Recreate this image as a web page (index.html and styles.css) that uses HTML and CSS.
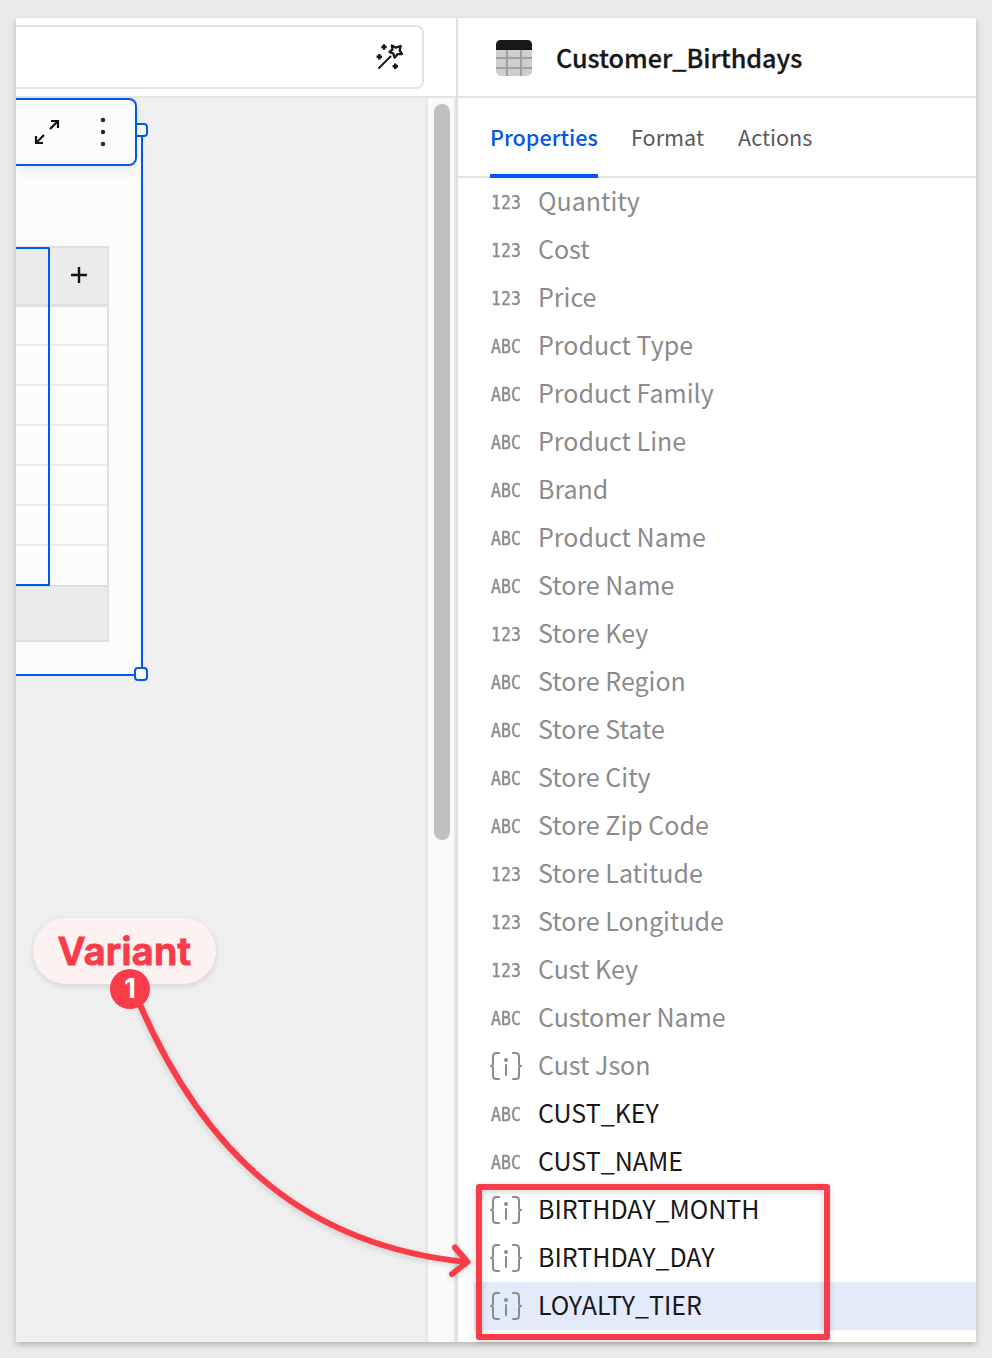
FILE: index.html
```html
<!DOCTYPE html>
<html lang="en">
<head>
<meta charset="utf-8">
<title>Customer_Birthdays</title>
<link rel="stylesheet" href="styles.css">
</head>
<body>
<svg class="defs" width="0" height="0">
  <symbol id="json" viewBox="0 0 32 28">
    <g fill="none" stroke="#8b8b8b" stroke-width="2" stroke-linecap="round" stroke-linejoin="round">
      <path d="M9 1H6.500Q3 1 3 4.500V11.500Q3 14 1 14Q3 14 3 16.500V23.500Q3 27 6.500 27H9M23 1H25.500Q29 1 29 4.500V11.500Q29 14 31 14Q29 14 29 16.500V23.500Q29 27 25.500 27H23M16 13V23"/>
    </g>
    <circle cx="16" cy="8" r="2" fill="#8b8b8b"/>
  </symbol>
</svg>
<main class="window">
  <section class="workspace">
    <div class="formula">
      <div class="formula-field">
        <svg class="wand" width="28" height="28" viewBox="0 0 28 28" fill="none" stroke="#181818" stroke-width="2">
          <path d="M3 26L14.500 14.500" stroke-linecap="round"/>
          <path d="M15.800 3.500L20 5.700L24.700 4L23.700 8.500L26 12L21.500 12.200L18.600 15.700L17.300 11.600L13.500 10L16.500 7.500Z" stroke-width="2.300" stroke-linejoin="round"/>
          <path d="M8 2.300V7.700M5.300 5H10.700M3.300 12V17.400M.6 14.700H6M19.300 21.600V27M16.600 24.300H22" stroke-width="2.500"/>
        </svg>
      </div>
    </div>
    <div class="stage">
      <div class="canvas">
        <div class="element">
          <div class="table">
            <div class="thead"><svg width="16" height="16" viewBox="0 0 16 16" stroke="#111" stroke-width="2.400"><path d="M8 0V16M0 8H16"/></svg></div>
            <div class="tr"></div><div class="tr"></div><div class="tr"></div><div class="tr"></div><div class="tr"></div><div class="tr"></div><div class="tr"></div>
            <div class="tfoot"></div>
            <div class="column-selection"></div>
          </div>
          <span class="handle handle-top"></span>
          <span class="handle handle-bottom"></span>
          <div class="toolbar">
            <svg width="26" height="26" viewBox="0 0 26 26" fill="none" stroke="#111" stroke-width="2.200"><path d="M16 10L24 2M17 2H24V9M10 16L2 24M2 17V24H9"/></svg>
            <svg class="more" width="6" height="30" viewBox="0 0 6 30" fill="#252525"><circle cx="3" cy="3" r="2.200"/><circle cx="3" cy="15" r="2.200"/><circle cx="3" cy="27" r="2.200"/></svg>
          </div>
        </div>
      </div>
      <div class="track"><div class="thumb"></div></div>
    </div>
  </section>
  <aside class="panel">
    <header class="title">
      <svg width="36" height="36" viewBox="0 0 36 36"><rect width="36" height="36" rx="5" fill="#cecece"/><path d="M0 10V5Q0 0 5 0H31Q36 0 36 5V10Z" fill="#181818"/><path d="M11 10V36M25 10V36M0 18H36M0 28H36" stroke="#a0a0a0" stroke-width="2"/></svg>
      <h1>Customer_Birthdays</h1>
    </header>
    <nav class="tabs"><a class="tab active">Properties</a><a class="tab format">Format</a><a class="tab">Actions</a></nav>
    <ul class="list">
      <li><span class="type">123</span><span class="name">Quantity</span></li>
      <li><span class="type">123</span><span class="name">Cost</span></li>
      <li><span class="type">123</span><span class="name">Price</span></li>
      <li><span class="type">ABC</span><span class="name">Product Type</span></li>
      <li><span class="type">ABC</span><span class="name">Product Family</span></li>
      <li><span class="type">ABC</span><span class="name">Product Line</span></li>
      <li><span class="type">ABC</span><span class="name">Brand</span></li>
      <li><span class="type">ABC</span><span class="name">Product Name</span></li>
      <li><span class="type">ABC</span><span class="name">Store Name</span></li>
      <li><span class="type">123</span><span class="name">Store Key</span></li>
      <li><span class="type">ABC</span><span class="name">Store Region</span></li>
      <li><span class="type">ABC</span><span class="name">Store State</span></li>
      <li><span class="type">ABC</span><span class="name">Store City</span></li>
      <li><span class="type">ABC</span><span class="name">Store Zip Code</span></li>
      <li><span class="type">123</span><span class="name">Store Latitude</span></li>
      <li><span class="type">123</span><span class="name">Store Longitude</span></li>
      <li><span class="type">123</span><span class="name">Cust Key</span></li>
      <li><span class="type">ABC</span><span class="name">Customer Name</span></li>
      <li><svg class="json"><use href="#json"/></svg><span class="name">Cust Json</span></li>
      <li class="on"><span class="type">ABC</span><span class="name">CUST_KEY</span></li>
      <li class="on"><span class="type">ABC</span><span class="name">CUST_NAME</span></li>
      <li class="on"><svg class="json"><use href="#json"/></svg><span class="name">BIRTHDAY_MONTH</span></li>
      <li class="on"><svg class="json"><use href="#json"/></svg><span class="name">BIRTHDAY_DAY</span></li>
      <li class="on selected"><svg class="json"><use href="#json"/></svg><span class="name">LOYALTY_TIER</span></li>
    </ul>
  </aside>
</main>
<div class="callout">Variant</div>
<div class="highlight"></div>
<svg class="arrow" width="992" height="1358" viewBox="0 0 992 1358" fill="none" stroke="#f83c49" stroke-width="6" stroke-linecap="round" stroke-linejoin="round">
  <path d="M138 1000C207 1162 312 1246 466 1262"/><path d="M455 1247.500L467.500 1262L452 1274"/>
</svg>
<div class="badge">1</div>
</body>
</html>
```
FILE: styles.css
```css
* { box-sizing: border-box; }
body {
  margin: 0;
  width: 992px;
  height: 1358px;
  padding: 18px 16px 16px;
  position: relative;
  overflow: hidden;
  background: #eaeaea;
  font-family: "Noto Sans CJK SC", "Open Sans", sans-serif;
}
.defs { position: absolute; }
.window {
  display: flex;
  width: 960px;
  height: 1324px;
  background: #fff;
  box-shadow: 0 3px 6px rgba(0, 0, 0, .22);
}
.workspace {
  width: 442px;
  display: flex;
  flex-direction: column;
  border-right: 2px solid #e1e1e1;
}
.formula {
  height: 80px;
  padding-top: 7px;
  border-bottom: 2px solid #e3e3e3;
}
.formula-field {
  width: 408px;
  height: 64px;
  border: 2px solid #e3e3e3;
  border-left: 0;
  border-radius: 0 8px 8px 0;
  display: flex;
  justify-content: flex-end;
  padding: 15px 18px 0 0;
}
.stage { flex: 1; display: flex; }
.canvas { width: 410px; background: #efefef; position: relative; }
.element {
  position: relative;
  width: 127px;
  height: 578px;
  background: linear-gradient(#efefef 32px, #fcfcfc 32px);
  border-bottom: 2px solid #0059eb;
}
.element::after {
  content: "";
  position: absolute;
  right: 0;
  top: 39px;
  bottom: 5px;
  width: 2px;
  background: #0059eb;
}
.table {
  position: absolute;
  top: 148px;
  left: 0;
  width: 93px;
  height: 396px;
  border: solid #dfdfdf;
  border-width: 2px 2px 2px 0;
}
.thead {
  height: 59px;
  background: #ebebeb;
  border-bottom: 3px solid #dfdfdf;
  display: flex;
  justify-content: flex-end;
  padding: 19px 20px 0 0;
}
.tr { height: 40px; border-bottom: 2px solid #ebebeb; }
.tr:nth-child(2) { height: 39px; }
.tr:nth-child(8) { height: 41px; border-bottom: 2px solid #dfdfdf; }
.tfoot { height: 53px; background: #ebebeb; }
.column-selection {
  position: absolute;
  left: 0;
  top: -1px;
  width: 34px;
  height: 339px;
  border: solid #0059eb;
  border-width: 2px 2px 2px 0;
  border-radius: 0 2px 0 0;
}
.handle {
  position: absolute;
  z-index: 1;
  right: -5px;
  width: 14px;
  height: 14px;
  background: #fff;
  border: 2px solid #0059eb;
  border-radius: 4px;
}
.handle-top { top: 25px; }
.handle-bottom { bottom: -7px; }
.toolbar {
  position: absolute;
  z-index: 2;
  left: 0;
  top: 0;
  width: 121px;
  height: 68px;
  background: #fcfcfc;
  border: 2px solid #0059eb;
  border-left: 0;
  border-radius: 0 8px 8px 0;
  box-shadow: 0 6px 12px rgba(0, 0, 0, .07);
  clip-path: inset(0 -20px -30px 0);
  display: flex;
  align-items: center;
  gap: 40px;
  padding-left: 18px;
}
.track {
  width: 30px;
  background: #fafafa;
  border: solid #e7e7e7;
  border-width: 0 2px;
  padding: 6px;
}
.thumb { width: 16px; height: 736px; background: #c1c1c1; border-radius: 8px; }
.panel { width: 518px; }
.title {
  height: 80px;
  border-bottom: 2px solid #e3e3e3;
  display: flex;
  align-items: center;
  gap: 24px;
  padding: 2px 0 0 38px;
}
.title h1 { margin: 0 0 2px; font-size: 25.150px; font-weight: 500; color: #181818; line-height: 36px; -webkit-text-stroke: .3px #181818; }
.tabs {
  height: 80px;
  border-bottom: 2px solid #e3e3e3;
  display: flex;
  gap: 33px;
  padding-left: 32px;
  font-size: 21.600px;
  color: #595959;
}
.tab { height: 80px; line-height: 77px; white-space: nowrap; }
.active { width: 108px; color: #0059eb; font-weight: 500; border-bottom: 4px solid #0059eb; }
.format { width: 74px; }
.list { margin: 0; padding: 0; list-style: none; }
.list li {
  display: flex;
  align-items: center;
  height: 48px;
  margin-left: 16px;
  padding-left: 16px;
  font-size: 25px;
  color: #8b8b8b;
  white-space: nowrap;
}
.name { margin-bottom: 4px; line-height: 36px; }
.list .on { color: #181818; }
.list .selected { background: #e3eafa; }
.type {
  width: 54.200px;
  margin-left: 1px;
  margin-right: -7.200px;
  font: 19px "DejaVu Sans Mono", monospace;
  color: #8b8b8b;
  -webkit-text-stroke: .4px #8b8b8b;
  transform: scaleX(.87);
  transform-origin: left;
}
.json { width: 32px; height: 28px; margin-right: 16px; flex: none; }
.callout {
  position: absolute;
  left: 33px;
  top: 918px;
  width: 183px;
  height: 66px;
  border-radius: 33px;
  background: #fef1f1;
  box-shadow: 0 2px 6px rgba(0, 0, 0, .12);
  text-align: center;
  font: 600 38px/67px Inter, sans-serif;
  letter-spacing: .3px;
  color: #f83c49;
  -webkit-text-stroke: 1.200px #f83c49;
}
.highlight {
  position: absolute;
  left: 476px;
  top: 1184px;
  width: 354px;
  height: 156px;
  border: 6px solid #f83c49;
  border-radius: 3px;
  filter: drop-shadow(0 2px 3px rgba(0, 0, 0, .18));
}
.arrow { position: absolute; left: 0; top: 0; filter: drop-shadow(0 2px 3px rgba(0, 0, 0, .15)); }
.badge {
  position: absolute;
  left: 110px;
  top: 969px;
  width: 40px;
  height: 40px;
  border-radius: 50%;
  background: #f83c49;
  color: #fff;
  font: 700 27px/40px Inter, sans-serif;
  text-align: center;
}
```
